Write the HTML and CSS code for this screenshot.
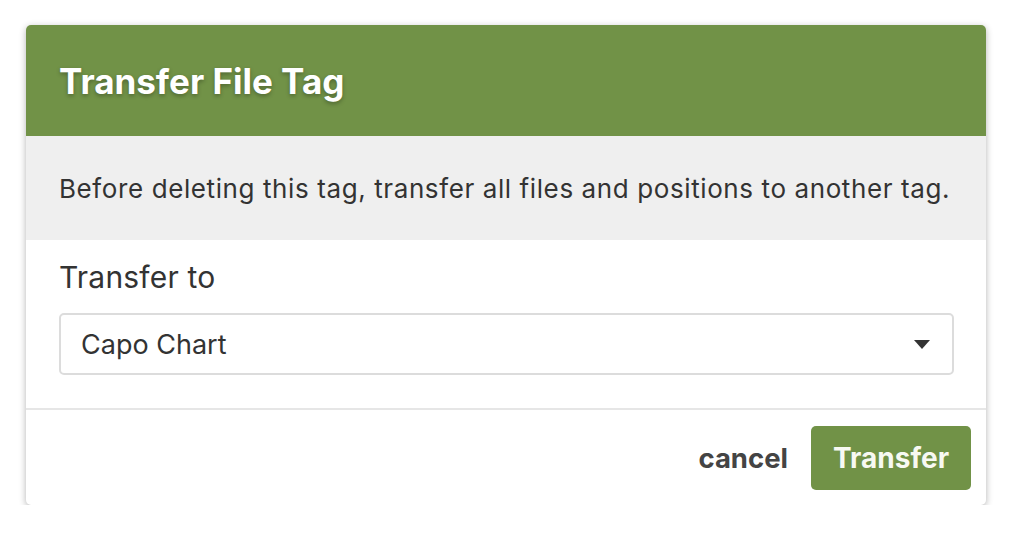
FILE: index.html
```html
<!DOCTYPE html>
<html>
<head>
<meta charset="utf-8">
<link rel="stylesheet" href="styles.css">
</head>
<body>
<div class="dialog">
  <div class="header"><h1 class="title">Transfer File Tag</h1></div>
  <div class="notice">Before deleting this tag, transfer all files and positions to another tag.</div>
  <div class="form">
    <label class="label">Transfer to</label>
    <div class="select">
      <span class="value">Capo Chart</span>
      <svg class="caret" width="16" height="9" viewBox="0 0 16 9"><path d="M0 0 H16 L8 9 Z" fill="#333"/></svg>
    </div>
  </div>
  <div class="footer">
    <span class="cancel">cancel</span>
    <button class="btn">Transfer</button>
  </div>
</div>
</body>
</html>
```
FILE: styles.css
```css
html, body { margin: 0; padding: 0; background: #fff; }
body { font-family: Inter, "Noto Sans", sans-serif; color: #333; }
.dialog {
  margin: 25px 0 0 26px;
  width: 960px;
  height: 480px;
  background: #fff;
  border-radius: 5px;
  box-shadow: 0 2px 7px rgba(0,0,0,0.3);
  overflow: hidden;
  display: flex;
  flex-direction: column;
}
.header {
  background: #719247;
  height: 111px;
  display: flex;
  align-items: center;
  padding-left: 33px;
}
.title {
  margin: 0;
  color: #fff;
  font-size: 35px;
  font-weight: 700;
  text-shadow: 0 2px 4px rgba(0,0,0,0.3);
}
.notice {
  background: #efefef;
  height: 104px;
  display: flex;
  align-items: center;
  padding-left: 33px;
  font-size: 26px;
  letter-spacing: 0.6px;
  color: #333;
}
.form {
  height: 170px;
  border-bottom: 2px solid #e6e6e6;
  padding: 18px 32px 0 33px;
  box-sizing: border-box;
  display: flex;
  flex-direction: column;
}
.label { font-size: 30px; line-height: 38px; letter-spacing: 0.2px; color: #333; }
.select {
  margin-top: 17px;
  height: 62px;
  box-sizing: border-box;
  border: 2px solid #dcdcdc;
  border-radius: 5px;
  display: flex;
  align-items: center;
  justify-content: space-between;
  padding: 0 22px 0 20px;
}
.value { font-size: 27px; color: #333; }
.footer {
  flex: 1;
  display: flex;
  justify-content: flex-end;
  align-items: center;
  padding: 1px 15px 0 0;
  gap: 23px;
}
.cancel { font-size: 27.5px; font-weight: 700; color: #444; }
.btn {
  width: 160px;
  height: 64px;
  border: 0;
  border-radius: 5px;
  background: #719247;
  color: #f7f9f2;
  font-family: inherit;
  font-size: 28px;
  font-weight: 700;
}
```
